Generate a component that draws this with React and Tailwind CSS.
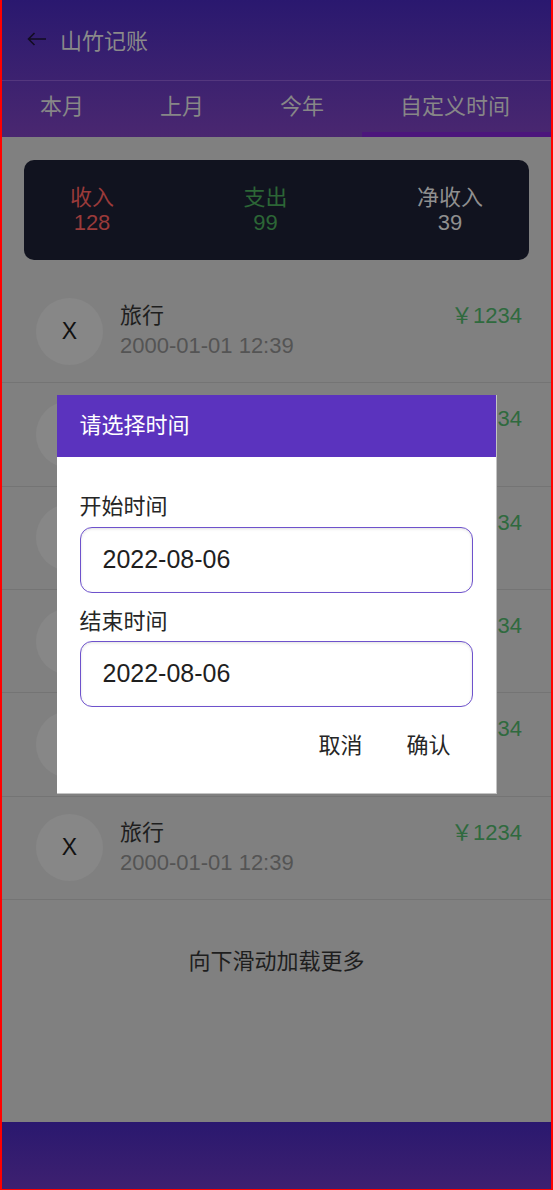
import React from "react";

const rows = [0, 1, 2, 3, 4, 5];

function Row() {
  return (
    <div className="flex h-[103.33px] items-center border-b border-[#747474] pl-[34px] pr-[29px]">
      <div className="flex h-[67px] w-[67px] shrink-0 items-center justify-center rounded-full bg-[#878787] text-[23px] leading-none text-[#111]">
        X
      </div>
      <div className="ml-[17px] flex flex-1 flex-col">
        <div className="flex items-center justify-between leading-[30px]">
          <span className="text-[22px] text-[#1e1e1e]">旅行</span>
          <span className="text-[22px] text-[#2f6a3e]">￥1234</span>
        </div>
        <div className="text-[22px] leading-[30px] text-[#545454]">2000-01-01 12:39</div>
      </div>
    </div>
  );
}

export default function App() {
  const tabs = ["本月", "上月", "今年", "自定义时间"];
  return (
    <div
      className="relative flex h-[1190px] w-[553px] flex-col overflow-hidden border-r-2 border-b border-l-2 border-[#ff0000] bg-[#808080]"
      style={{ fontFamily: '"Liberation Sans", "Noto Sans CJK SC", sans-serif' }}
    >
      {/* header */}
      <div className="bg-linear-to-b from-[#2a186f] to-[#4a2770]">
        <div className="flex h-[81px] items-center border-b border-[#54377e] pl-[25px] pt-[4px]">
          <svg width="20" height="14" viewBox="0 0 20 14" className="mb-[6px]" fill="none" stroke="#120c22" strokeWidth="1.6">
            <path d="M19 7H1.5M7.5 1L1.5 7L7.5 13" />
          </svg>
          <span className="ml-[13px] text-[22px] leading-[28px] text-[#8a8a8a]">山竹记账</span>
        </div>
        <div className="flex h-[56px]">
          {tabs.map((t, i) => (
            <div
              key={t}
              className={
                "flex items-center px-[38px] text-[22px] leading-[26px] text-[#878787] border-b-[5px] " +
                (i === 3 ? "flex-1 border-[#4c167c]" : "border-transparent")
              }
            >
              {t}
            </div>
          ))}
        </div>
      </div>

      {/* summary card */}
      <div className="mx-[22px] mt-[23px] flex h-[100px] items-center justify-between rounded-[10px] bg-[#11131f] px-[46px] text-[22px] leading-[25px]">
        <div className="text-center text-[#9a3a3a]">
          <div>收入</div>
          <div>128</div>
        </div>
        <div className="text-center text-[#2c6636]">
          <div>支出</div>
          <div>99</div>
        </div>
        <div className="text-center text-[#8f8f8f]">
          <div>净收入</div>
          <div>39</div>
        </div>
      </div>

      {/* list */}
      <div className="mt-[20px]">
        {rows.map((r) => (
          <Row key={r} />
        ))}
      </div>

      <div className="pt-[49px] text-center text-[22px] leading-[26px] text-[#1e1e1e]">向下滑动加载更多</div>

      <div className="flex-1" />

      <div className="h-[67px] bg-linear-to-b from-[#2a186f] to-[#3e2070]" />

      {/* modal */}
      <div className="absolute inset-0 flex items-center justify-center">
        <div className="w-[440px] border-r border-b border-[#c4c4c4] bg-white">
          <div className="flex h-[62px] items-center bg-[#5b33be] pl-[23px] text-[22px] leading-[26px] text-white">
            请选择时间
          </div>
          <div className="px-[23px] pt-[37px] pb-[34px]">
            <div className="text-[22px] leading-[26px] text-[#262626]">开始时间</div>
            <div className="mt-[7px] flex h-[66px] items-center rounded-[12px] border border-[#6e52cc] pl-[22px] text-[25px] text-[#1f1f1f] shadow-[inset_0_1px_3px_rgba(0,0,0,0.12)]">
              2022-08-06
            </div>
            <div className="mt-[16px] text-[22px] leading-[26px] text-[#262626]">结束时间</div>
            <div className="mt-[6px] flex h-[66px] items-center rounded-[12px] border border-[#6e52cc] pl-[22px] text-[25px] text-[#1f1f1f] shadow-[inset_0_1px_3px_rgba(0,0,0,0.12)]">
              2022-08-06
            </div>
            <div className="mt-[26px] flex justify-end">
              <button className="px-[22px] text-[22px] leading-[26px] text-[#262626]">取消</button>
              <button className="px-[22px] text-[22px] leading-[26px] text-[#262626]">确认</button>
            </div>
          </div>
        </div>
      </div>
    </div>
  );
}
